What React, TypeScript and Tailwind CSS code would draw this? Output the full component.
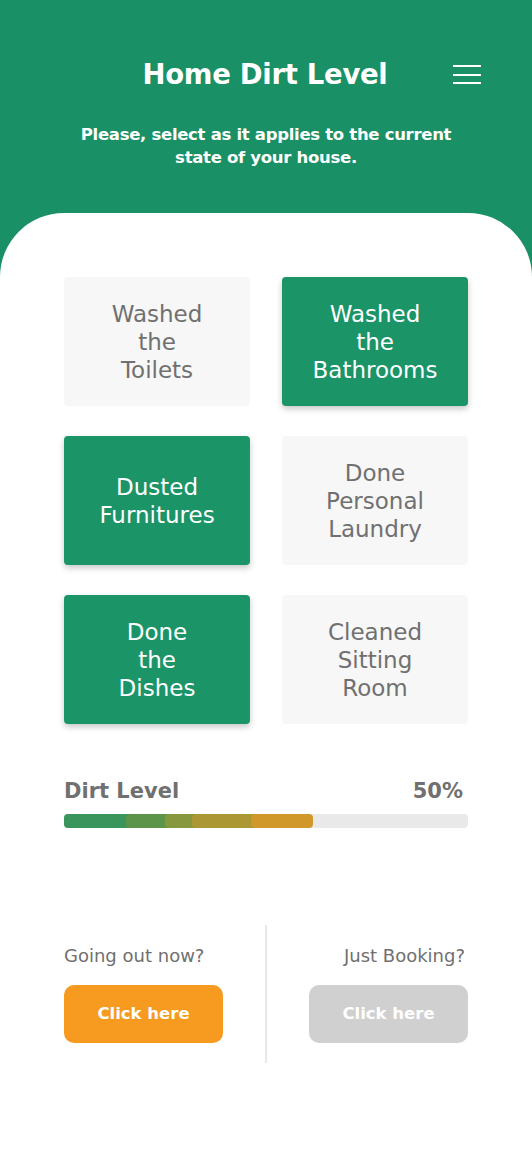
import React from "react";

const tasks = [
  { label: ["Washed", "the", "Toilets"], on: false },
  { label: ["Washed", "the", "Bathrooms"], on: true },
  { label: ["Dusted", "Furnitures"], on: true },
  { label: ["Done", "Personal", "Laundry"], on: false },
  { label: ["Done", "the", "Dishes"], on: true },
  { label: ["Cleaned", "Sitting", "Room"], on: false },
];

export default function App() {
  return (
    <div className="min-h-[1152px] w-[532px] bg-[#199065]" style={{ fontFamily: '"DejaVu Sans", "Open Sans", sans-serif' }}>
      <header className="relative h-[213px] px-16 pt-[56px] text-white">
        <h1 className="ml-[-2px] text-center text-[27.5px] font-bold leading-[36px] tracking-[-0.3px]">Home Dirt Level</h1>
        <button className="absolute right-[51px] top-[65px] flex w-[28px] flex-col gap-[6.5px]">
          <span className="h-[2px] w-full bg-white" />
          <span className="h-[2px] w-full bg-white" />
          <span className="h-[2px] w-full bg-white" />
        </button>
        <p className="mx-auto mt-[31px] w-[390px] text-center text-[16.5px] font-semibold leading-[23px] tracking-[-0.3px]">
          Please, select as it applies to the current state of your house.
        </p>
      </header>

      <main className="min-h-[939px] rounded-t-[64px] bg-white px-16 pt-16">
        <div className="grid grid-cols-2 gap-x-[32px] gap-y-[30px]">
          {tasks.map((t, i) => (
            <div
              key={i}
              className={
                "flex h-[129px] flex-col items-center justify-center rounded-[4px] text-center text-[23px] leading-[28px] " +
                (t.on ? "bg-[#1b9467] text-white shadow-[0_3px_6px_rgba(0,0,0,0.22)]" : "bg-[#f7f7f7] text-[#707070]")
              }
            >
              {t.label.map((l) => (
                <span key={l}>{l}</span>
              ))}
            </div>
          ))}
        </div>

        <div className="mt-[53px] flex items-center justify-between text-[21px] font-bold leading-[28px] text-[#707070]">
          <span>Dirt Level</span>
          <span className="mr-[5px]">50%</span>
        </div>
        <div className="relative mt-[9px] h-[14px] w-full rounded-[4px] bg-[#e9e9e9]">
          <div className="absolute left-0 top-0 h-full w-[86px] rounded-[4px] bg-[#3a955c]" />
          <div className="absolute left-[62px] top-0 h-full w-[60px] rounded-[4px] bg-[#5c9449]" />
          <div className="absolute left-[101px] top-0 h-full w-[50px] rounded-[4px] bg-[#86973e]" />
          <div className="absolute left-[128px] top-0 h-full w-[80px] rounded-[4px] bg-[#ab9834]" />
          <div className="absolute left-[187px] top-0 h-full w-[62px] rounded-[4px] bg-[#d0972a]" />
        </div>

        <div className="mt-[97px] flex">
          <div className="flex flex-1 flex-col items-start pt-[18px]">
            <span className="text-[18px] leading-[26px] text-[#707070]">Going out now?</span>
            <button className="mt-[16px] h-[58px] w-[159px] rounded-[10px] bg-[#f69a20] text-[16.5px] font-bold text-white">
              Click here
            </button>
          </div>
          <div className="h-[138px] w-[2px] bg-[#e8e8e8]" />
          <div className="flex flex-1 flex-col items-end pt-[18px]">
            <span className="mr-[3px] text-[18px] leading-[26px] text-[#707070]">Just Booking?</span>
            <button className="mt-[16px] h-[58px] w-[159px] rounded-[10px] bg-[#d0d0d0] text-[16.5px] font-bold text-white">
              Click here
            </button>
          </div>
        </div>
      </main>
    </div>
  );
}
